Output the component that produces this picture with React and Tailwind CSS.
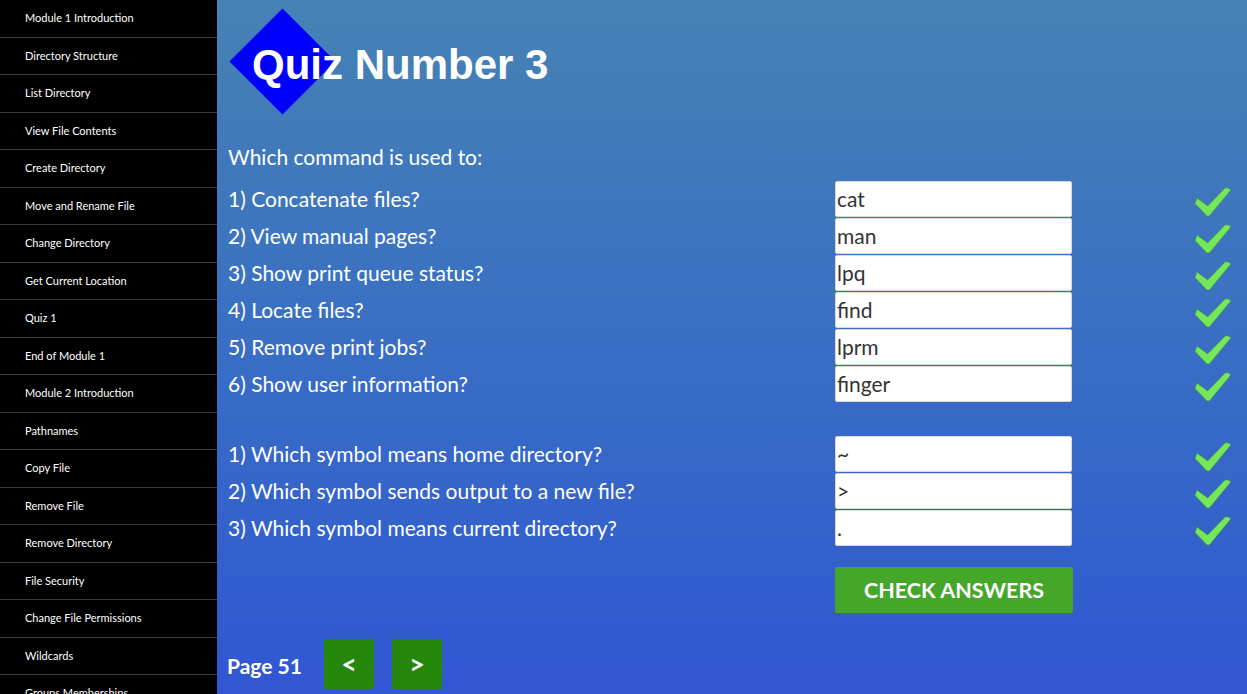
import React from "react";

const nav = [
  "Module 1 Introduction",
  "Directory Structure",
  "List Directory",
  "View File Contents",
  "Create Directory",
  "Move and Rename File",
  "Change Directory",
  "Get Current Location",
  "Quiz 1",
  "End of Module 1",
  "Module 2 Introduction",
  "Pathnames",
  "Copy File",
  "Remove File",
  "Remove Directory",
  "File Security",
  "Change File Permissions",
  "Wildcards",
  "Groups Memberships",
  "Change Group",
];

const group1 = [
  ["1) Concatenate files?", "cat"],
  ["2) View manual pages?", "man"],
  ["3) Show print queue status?", "lpq"],
  ["4) Locate files?", "find"],
  ["5) Remove print jobs?", "lprm"],
  ["6) Show user information?", "finger"],
];

const group2 = [
  ["1) Which symbol means home directory?", "~"],
  ["2) Which symbol sends output to a new file?", ">"],
  ["3) Which symbol means current directory?", "."],
];

function Check() {
  return (
    <svg width="37" height="32" viewBox="0 0 38 32" className="mt-[5px]">
      <path
        d="M2 12 L13 20 L31 1.5 Q34 0.5 37 3.5 L15 30 Q13.5 31 12 30 L0 17.5 Z"
        fill="#74e85a"
        stroke="#4f8a3c"
        strokeWidth="0.6"
        strokeLinejoin="round"
      />
    </svg>
  );
}

function Row({ label, value }) {
  return (
    <div className="flex h-[37px] items-start">
      <div className="flex h-[36px] w-[607px] shrink-0 items-center whitespace-nowrap text-[21px] text-white">{label}</div>
      <div className="flex h-[36px] w-[237px] shrink-0 items-center rounded-[2px] border border-[#d8d8d8] bg-white pl-[1px] text-[21px] text-[#333]">
        {value}
      </div>
      <div className="ml-[123px] shrink-0">
        <Check />
      </div>
    </div>
  );
}

export default function App() {
  return (
    <div className="flex h-[694px] w-[1247px] overflow-hidden" style={{ fontFamily: "Lato, 'Open Sans', sans-serif" }}>
      <aside className="h-full w-[217px] shrink-0 overflow-hidden bg-black">
        {nav.map((n) => (
          <div key={n} className="flex h-[37.5px] items-center border-b border-[#3a3a3a] pl-[25px] text-[11px] text-white">
            {n}
          </div>
        ))}
      </aside>
      <main className="h-full flex-1 bg-gradient-to-b from-[#4682b4] to-[#3156d2] pl-[11px]">
        <div className="relative h-[139px]">
          <div className="absolute left-[17px] top-[24px] h-[75px] w-[75px] rotate-45 bg-[#0000ff]" />
          <h1
            className="relative ml-[24px] pt-[41px] text-[42px] font-bold leading-[48px] text-white"
            style={{ fontFamily: "'Liberation Sans', Arial, sans-serif" }}
          >
            Quiz Number 3
          </h1>
        </div>
        <div className="mb-[6px] flex h-[36px] items-center text-[21px] text-white">Which command is used to:</div>
        {group1.map(([l, v]) => (
          <Row key={l} label={l} value={v} />
        ))}
        <div className="h-[33px]" />
        {group2.map(([l, v]) => (
          <Row key={l} label={l} value={v} />
        ))}
        <div className="mt-[20px] flex">
          <div className="w-[607px] shrink-0" />
          <button className="h-[46px] w-[238px] shrink-0 rounded-[2px] bg-[#44a72a] text-[21.5px] font-bold text-white">
            CHECK ANSWERS
          </button>
        </div>
        <div className="mt-[26px] flex items-center">
          <span className="-ml-[1px] mt-[4px] w-[75px] shrink-0 whitespace-nowrap text-[21px] font-bold text-white">Page 51</span>
          <button className="ml-[22px] flex h-[50px] w-[50px] shrink-0 items-center justify-center rounded-[2px] bg-[#25880d] text-[27px] font-bold text-white">
            &lt;
          </button>
          <button className="ml-[18px] flex h-[50px] w-[50px] shrink-0 items-center justify-center rounded-[2px] bg-[#25880d] text-[27px] font-bold text-white">
            &gt;
          </button>
        </div>
      </main>
    </div>
  );
}
